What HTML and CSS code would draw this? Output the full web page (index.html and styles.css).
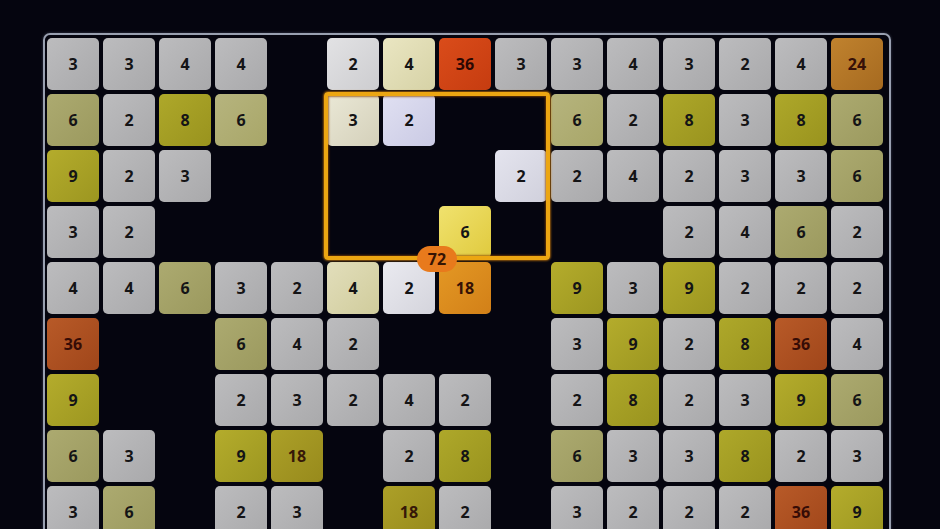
FILE: index.html
```html
<!DOCTYPE html>
<html>
<head>
<meta charset="utf-8">
<link rel="stylesheet" href="styles.css">
</head>
<body>
<div class="board">
  <div class="grid">
    <div class="t g">3</div><div class="t g">3</div><div class="t g">4</div><div class="t g">4</div><div class="e"></div><div class="t hw">2</div><div class="t hc">4</div><div class="t hr">36</div><div class="t g">3</div><div class="t g">3</div><div class="t g">4</div><div class="t g">3</div><div class="t g">2</div><div class="t g">4</div><div class="t v24">24</div>

    <div class="t v6">6</div><div class="t g">2</div><div class="t v8">8</div><div class="t v6 lt">6</div><div class="e"></div><div class="t hs">3</div><div class="t hl">2</div><div class="e"></div><div class="e"></div><div class="t v6 lt">6</div><div class="t g">2</div><div class="t v8">8</div><div class="t g">3</div><div class="t v8">8</div><div class="t v6">6</div>

    <div class="t v9">9</div><div class="t g">2</div><div class="t g">3</div><div class="e"></div><div class="e"></div><div class="e"></div><div class="e"></div><div class="e"></div><div class="t hl2">2</div><div class="t g">2</div><div class="t g">4</div><div class="t g">2</div><div class="t g">3</div><div class="t g">3</div><div class="t v6">6</div>

    <div class="t g">3</div><div class="t g">2</div><div class="e"></div><div class="e"></div><div class="e"></div><div class="e"></div><div class="e"></div><div class="t hy">6</div><div class="e"></div><div class="e"></div><div class="e"></div><div class="t g">2</div><div class="t g">4</div><div class="t v6">6</div><div class="t g">2</div>

    <div class="t g">4</div><div class="t g">4</div><div class="t v6">6</div><div class="t g">3</div><div class="t g">2</div><div class="t hc2">4</div><div class="t hw2">2</div><div class="t ho">18</div><div class="e"></div><div class="t v9">9</div><div class="t g">3</div><div class="t v9">9</div><div class="t g">2</div><div class="t g">2</div><div class="t g">2</div>

    <div class="t v36">36</div><div class="e"></div><div class="e"></div><div class="t v6">6</div><div class="t g">4</div><div class="t g">2</div><div class="e"></div><div class="e"></div><div class="e"></div><div class="t g">3</div><div class="t v9">9</div><div class="t g">2</div><div class="t v8">8</div><div class="t v36">36</div><div class="t g">4</div>

    <div class="t v9">9</div><div class="e"></div><div class="e"></div><div class="t g">2</div><div class="t g">3</div><div class="t g">2</div><div class="t g">4</div><div class="t g">2</div><div class="e"></div><div class="t g">2</div><div class="t v8">8</div><div class="t g">2</div><div class="t g">3</div><div class="t v9">9</div><div class="t v6">6</div>

    <div class="t v6">6</div><div class="t g">3</div><div class="e"></div><div class="t v9">9</div><div class="t v18">18</div><div class="e"></div><div class="t g">2</div><div class="t v8">8</div><div class="e"></div><div class="t v6">6</div><div class="t g">3</div><div class="t g">3</div><div class="t v8">8</div><div class="t g">2</div><div class="t g">3</div>

    <div class="t g">3</div><div class="t v6">6</div><div class="e"></div><div class="t g">2</div><div class="t g">3</div><div class="e"></div><div class="t v18">18</div><div class="t g">2</div><div class="e"></div><div class="t g">3</div><div class="t g">2</div><div class="t g">2</div><div class="t g">2</div><div class="t v36">36</div><div class="t v9">9</div>
  </div>
  <div class="sel"></div>
  <div class="badge">72</div>
</div>
</body>
</html>
```

FILE: styles.css
```css
html, body {
  margin: 0;
  padding: 0;
  background: #05050f;
  width: 940px;
  height: 529px;
  overflow: hidden;
  font-family: "Open Sans", "Noto Sans", sans-serif;
}

.board {
  position: relative;
  margin: 33px 0 0 43px;
  width: 840px;
  padding: 3px 2px 2px 2px;
  border: 2px solid #99a0b0;
  border-radius: 7px;
  box-shadow: 0 0 3px rgba(150, 160, 190, 0.35);
}

.grid {
  display: grid;
  grid-template-columns: repeat(15, 52px);
  grid-auto-rows: 52px;
  gap: 4px;
}

.t {
  border-radius: 5px;
  display: flex;
  align-items: center;
  justify-content: center;
  font-weight: 700;
  font-size: 16px;
  color: #141416;
}

.g   { background: linear-gradient(135deg, #bcbcbe 0%, #a9a9ab 100%); }
.v6  { background: linear-gradient(135deg, #acaa70 0%, #9b995e 100%); }
.v6.lt { background: linear-gradient(135deg, #b6b47e 0%, #a8a668 100%); }
.v8  { background: linear-gradient(135deg, #aea82a 0%, #99931e 100%); }
.v9  { background: linear-gradient(135deg, #b4ac2c 0%, #9c9620 100%); }
.v18 { background: linear-gradient(135deg, #aca028 0%, #978a1c 100%); color: #361808; }
.v24 { background: linear-gradient(135deg, #c0822e 0%, #a66a20 100%); color: #361008; }
.v36 { background: linear-gradient(135deg, #b85a28 0%, #a0461a 100%); color: #360c06; }

.hw  { background: linear-gradient(135deg, #e2e2e4 0%, #cdcdd0 100%); }
.hc  { background: linear-gradient(135deg, #eae6c2 0%, #d6d2a6 100%); }
.hr  { background: linear-gradient(135deg, #da4c1a 0%, #c63c10 100%); color: #2a0804; }
.hs  { background: linear-gradient(135deg, #eae8d6 0%, #d4d0ba 100%); }
.hl  { background: linear-gradient(135deg, #e0e0f2 0%, #cacae4 100%); }
.hl2 { background: linear-gradient(135deg, #e4e4ee 0%, #d0d0dc 100%); }
.hy  { background: linear-gradient(135deg, #f0e26e 0%, #e0ca3e 100%); }
.hc2 { background: linear-gradient(135deg, #e2debb 0%, #d0cc9c 100%); }
.hw2 { background: linear-gradient(135deg, #eaeaf0 0%, #d4d4dc 100%); }
.ho  { background: linear-gradient(135deg, #e49824 0%, #d28018 100%); color: #361206; }

.sel {
  position: absolute;
  left: 279px;
  top: 57px;
  width: 218px;
  height: 160px;
  border: 4px solid #eca612;
  border-radius: 4px;
  box-shadow: 0 0 2px 1px rgba(200, 120, 10, 0.7), inset 0 0 2px 1px rgba(140, 70, 0, 0.7);
  pointer-events: none;
}

.badge {
  position: absolute;
  left: 372px;
  top: 211px;
  width: 40px;
  height: 26px;
  border-radius: 13px;
  background: #e87a1c;
  color: #361404;
  font-weight: 700;
  font-size: 16px;
  display: flex;
  align-items: center;
  justify-content: center;
}
```
